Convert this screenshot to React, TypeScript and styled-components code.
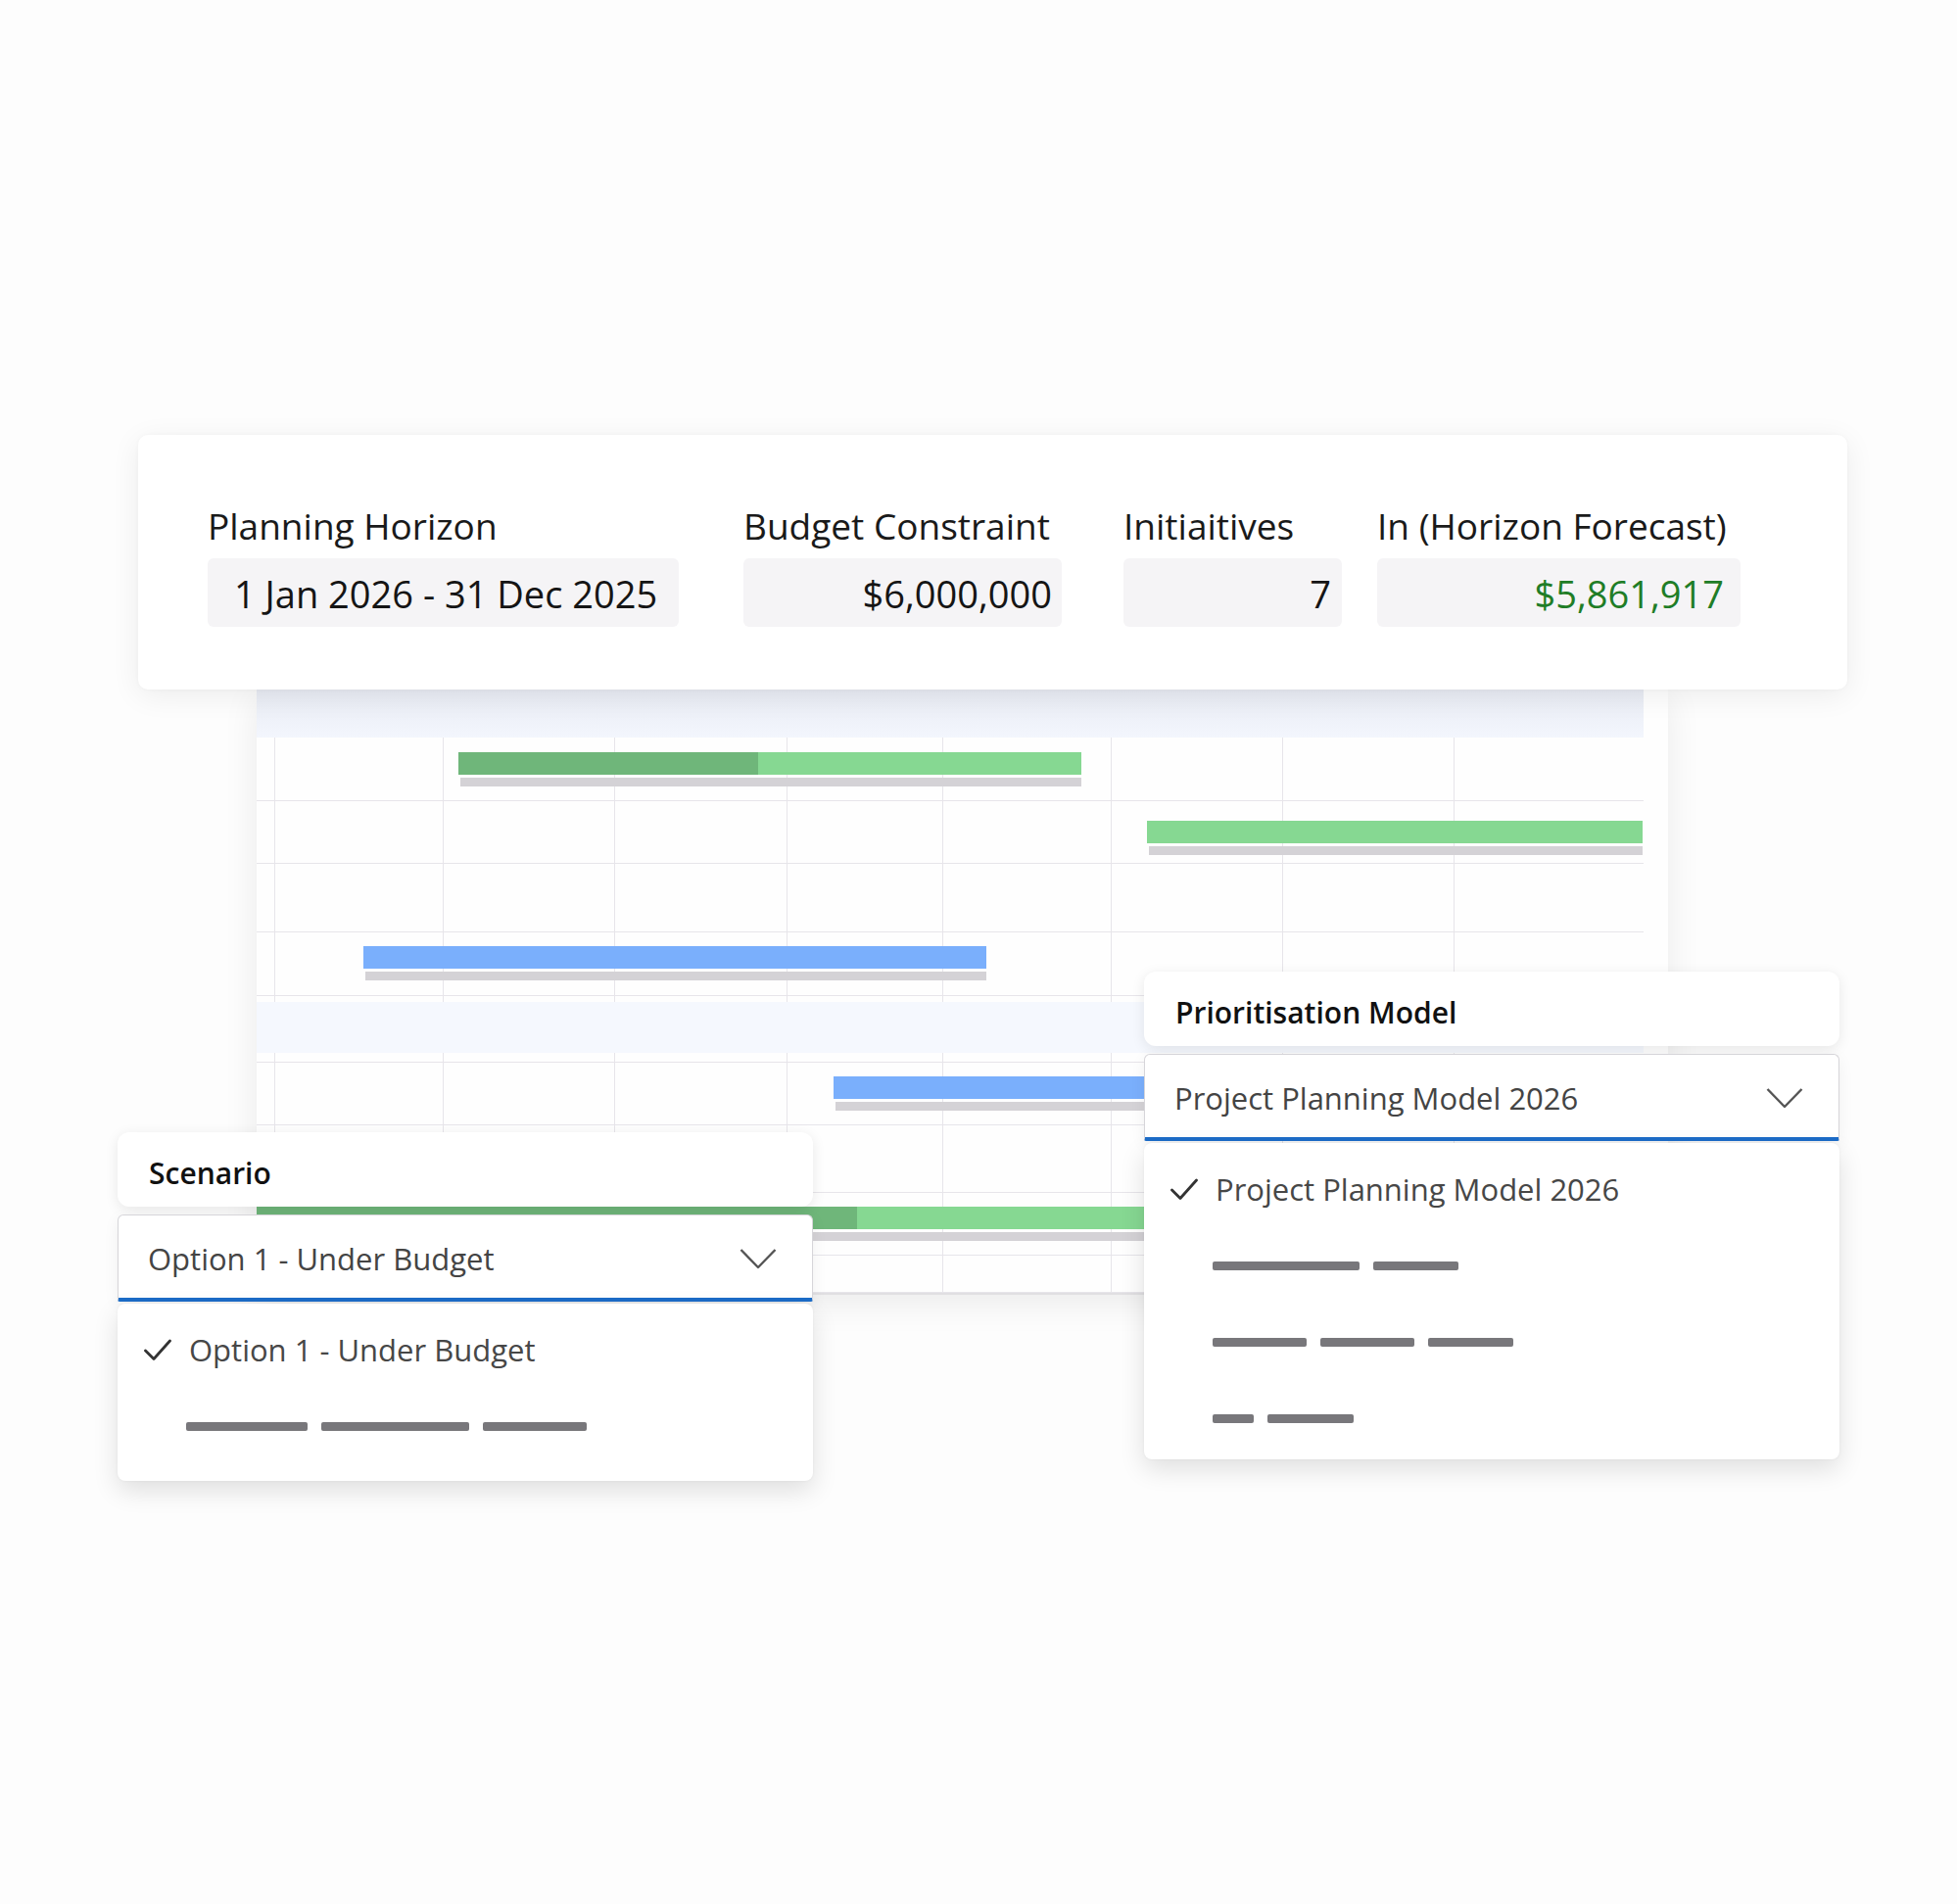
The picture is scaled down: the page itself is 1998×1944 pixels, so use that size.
import React from 'react';
import styled, { createGlobalStyle } from 'styled-components';

const GlobalStyle = createGlobalStyle`
  html, body {
    margin: 0;
    padding: 0;
    background: #fdfdfd;
  }
  body {
    font-family: 'Open Sans', 'Noto Sans', sans-serif;
    color: #1b1b1b;
  }
`;

const Page = styled.main`
  box-sizing: border-box;
  width: 1998px;
  min-height: 1944px;
  padding: 444px 0 0 141px;
`;

const Stage = styled.div`
  position: relative;
  width: 1745px;
`;

/* ---------- summary strip ---------- */

const SummaryCard = styled.section`
  position: relative;
  z-index: 2;
  box-sizing: border-box;
  height: 260px;
  padding: 71px 0 0 71px;
  display: flex;
  background: #ffffff;
  border-radius: 10px;
  box-shadow: 0 6px 30px rgba(0, 0, 0, 0.07), 0 0 4px rgba(0, 0, 0, 0.03);
`;

const Field = styled.div<{ $width: number; $gap: number }>`
  width: ${p => p.$width}px;
  margin-right: ${p => p.$gap}px;
  display: flex;
  flex-direction: column;
`;

const FieldLabel = styled.div`
  font-size: 37px;
  line-height: 44px;
  color: #1a1a1a;
  white-space: nowrap;
`;

const FieldValue = styled.div<{ $align: 'left' | 'right'; $inset: number; $tone?: 'good' }>`
  margin-top: 11px;
  height: 70px;
  box-sizing: border-box;
  padding: 2px ${p => (p.$align === 'right' ? p.$inset : 0)}px 0 ${p => (p.$align === 'left' ? p.$inset : 0)}px;
  font-size: 38px;
  line-height: 68px;
  text-align: ${p => p.$align};
  color: ${p => (p.$tone === 'good' ? '#1f7d27' : '#151515')};
  background: #f5f4f6;
  border-radius: 6px;
  white-space: nowrap;
`;

/* ---------- timeline ---------- */

const GanttPanel = styled.div`
  position: relative;
  z-index: 1;
  margin-left: 121px;
  width: 1441px;
  box-sizing: border-box;
  padding-right: 25px;
  background: #fefefe;
  border-bottom: 2px solid #e0dfe2;
  box-shadow: 0 8px 34px rgba(0, 0, 0, 0.08);
`;

const HeaderBand = styled.div`
  height: 49px;
  background: linear-gradient(180deg, #e8ebf3 0%, #f3f6fd 100%);
`;

const Row = styled.div<{ $h: number }>`
  position: relative;
  box-sizing: border-box;
  height: ${p => p.$h}px;
  border-bottom: 1px solid #e7e5ea;
`;

const Cells = styled.div`
  display: grid;
  grid-template-columns: 18px 172px 175px 176px 159px 172px 175px 175px 194px;
  height: 100%;
`;

const Cell = styled.div`
  & + & {
    border-left: 1px solid #e7e5ea;
  }
`;

const GroupBand = styled.div`
  position: absolute;
  left: 0;
  right: 0;
  top: 6px;
  bottom: 9px;
  background: #f5f8fe;
`;

const BarStack = styled.div`
  position: absolute;
  display: flex;
  flex-direction: column;
  gap: 3px;
`;

const Bar = styled.div<{ $tone: 'green' | 'blue' }>`
  height: 23px;
  display: flex;
  background: ${p => (p.$tone === 'green' ? '#86d892' : '#7aaffc')};
`;

const Progress = styled.div`
  height: 100%;
  background: #6fb67a;
`;

const Baseline = styled.div`
  height: 9px;
  margin-left: 2px;
  background: #d4d2d6;
`;

/* ---------- dropdowns ---------- */

const Dropdown = styled.div<{ $x: number; $y: number }>`
  position: absolute;
  z-index: 3;
  left: ${p => p.$x}px;
  top: ${p => p.$y}px;
  width: 710px;
  display: flex;
  flex-direction: column;
`;

const DropdownTitle = styled.div`
  height: 76px;
  box-sizing: border-box;
  padding: 6px 0 0 32px;
  font-size: 30px;
  font-weight: 600;
  line-height: 72px;
  color: #111111;
  background: #ffffff;
  border-radius: 12px;
  box-shadow: 0 3px 14px rgba(0, 0, 0, 0.09);
`;

const SelectBox = styled.div`
  margin-top: 8px;
  height: 89px;
  box-sizing: border-box;
  padding: 4px 36px 0 30px;
  display: flex;
  align-items: center;
  justify-content: space-between;
  background: #ffffff;
  border: 1px solid #d6d5d9;
  border-bottom: 4px solid #1c6cc8;
  border-radius: 6px 6px 2px 2px;
  box-shadow: 0 4px 16px rgba(0, 0, 0, 0.06);
`;

const SelectText = styled.span`
  font-size: 31px;
  line-height: 80px;
  color: #444444;
`;

const OptionList = styled.div<{ $tail: number }>`
  margin-top: 2px;
  padding: 8px 0 ${p => p.$tail}px;
  background: #ffffff;
  border-radius: 8px;
  box-shadow: 0 10px 26px rgba(0, 0, 0, 0.12), 0 0 3px rgba(0, 0, 0, 0.05);
`;

const OptionRow = styled.div`
  height: 78px;
  display: flex;
  align-items: center;
  padding-left: 27px;
  gap: 18px;
`;

const OptionText = styled.span`
  font-size: 31px;
  line-height: 44px;
  color: #474747;
`;

const SkeletonRow = styled.div`
  height: 78px;
  display: flex;
  align-items: center;
  gap: 14px;
  padding-left: 70px;
`;

const SkeletonBar = styled.div<{ $w: number }>`
  width: ${p => p.$w}px;
  height: 9px;
  border-radius: 2px;
  background: #78777b;
`;

const Chevron = () => (
  <svg width="38" height="22" viewBox="0 0 38 22" fill="none">
    <polyline points="1.5,2 19,20 36.5,2" stroke="#555" strokeWidth="2.4" strokeLinejoin="round" />
  </svg>
);

const Check = () => (
  <svg width="28" height="22" viewBox="0 0 28 22" fill="none">
    <polyline points="1.5,12 10,20.5 26.5,2" stroke="#333" strokeWidth="2.8" strokeLinecap="round" strokeLinejoin="round" />
  </svg>
);

type Task = { left: number; width: number; top: number; tone: 'green' | 'blue'; done?: number };
type Lane = { h: number; group?: boolean; task?: Task };

const lanes: Lane[] = [
  { h: 65, task: { left: 206, width: 636, top: 15, tone: 'green', done: 306 } },
  { h: 64, task: { left: 909, width: 506, top: 20, tone: 'green' } },
  { h: 70 },
  { h: 65, task: { left: 109, width: 636, top: 14, tone: 'blue' } },
  { h: 68, group: true },
  { h: 64, task: { left: 589, width: 640, top: 14, tone: 'blue' } },
  { h: 69 },
  { h: 64, task: { left: 0, width: 1230, top: 14, tone: 'green', done: 613 } },
  { h: 38 },
];

const summary = [
  { label: 'Planning Horizon', value: '1 Jan 2026 - 31 Dec 2025', width: 481, gap: 66, align: 'left' as const, inset: 27 },
  { label: 'Budget Constraint', value: '$6,000,000', width: 325, gap: 63, align: 'right' as const, inset: 10 },
  { label: 'Initiaitives', value: '7', width: 223, gap: 36, align: 'right' as const, inset: 11 },
  { label: 'In (Horizon Forecast)', value: '$5,861,917', width: 371, gap: 0, align: 'right' as const, inset: 17, tone: 'good' as const },
];

const GridCells = () => (
  <Cells>
    {Array.from({ length: 9 }).map((_, i) => (
      <Cell key={i} />
    ))}
  </Cells>
);

function App() {
  return (
    <Page>
      <GlobalStyle />
      <Stage>
        <SummaryCard>
          {summary.map(f => (
            <Field key={f.label} $width={f.width} $gap={f.gap}>
              <FieldLabel>{f.label}</FieldLabel>
              <FieldValue $align={f.align} $inset={f.inset} $tone={f.tone}>
                {f.value}
              </FieldValue>
            </Field>
          ))}
        </SummaryCard>

        <GanttPanel>
          <HeaderBand />
          {lanes.map((lane, i) => (
            <Row key={i} $h={lane.h}>
              <GridCells />
              {lane.group && <GroupBand />}
              {lane.task && (
                <BarStack style={{ left: lane.task.left, top: lane.task.top, width: lane.task.width }}>
                  <Bar $tone={lane.task.tone}>
                    {lane.task.done ? <Progress style={{ width: lane.task.done }} /> : null}
                  </Bar>
                  <Baseline />
                </BarStack>
              )}
            </Row>
          ))}
        </GanttPanel>

        <Dropdown $x={-21} $y={712}>
          <DropdownTitle>Scenario</DropdownTitle>
          <SelectBox>
            <SelectText>Option 1 - Under Budget</SelectText>
            <Chevron />
          </SelectBox>
          <OptionList $tail={17}>
            <OptionRow>
              <Check />
              <OptionText>Option 1 - Under Budget</OptionText>
            </OptionRow>
            <SkeletonRow>
              <SkeletonBar $w={124} />
              <SkeletonBar $w={151} />
              <SkeletonBar $w={106} />
            </SkeletonRow>
          </OptionList>
        </Dropdown>

        <Dropdown $x={1027} $y={548}>
          <DropdownTitle>Prioritisation Model</DropdownTitle>
          <SelectBox>
            <SelectText>Project Planning Model 2026</SelectText>
            <Chevron />
          </SelectBox>
          <OptionList $tail={3}>
            <OptionRow>
              <Check />
              <OptionText>Project Planning Model 2026</OptionText>
            </OptionRow>
            <SkeletonRow>
              <SkeletonBar $w={150} />
              <SkeletonBar $w={87} />
            </SkeletonRow>
            <SkeletonRow>
              <SkeletonBar $w={96} />
              <SkeletonBar $w={96} />
              <SkeletonBar $w={87} />
            </SkeletonRow>
            <SkeletonRow>
              <SkeletonBar $w={42} />
              <SkeletonBar $w={88} />
            </SkeletonRow>
          </OptionList>
        </Dropdown>
      </Stage>
    </Page>
  );
}

export default App;
